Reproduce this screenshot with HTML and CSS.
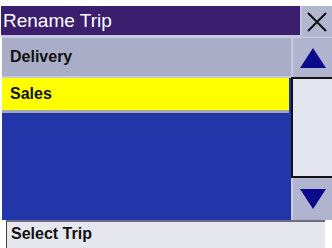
FILE: index.html
```html
<!DOCTYPE html>
<html>
<head>
<meta charset="utf-8">
<link rel="stylesheet" href="styles.css">
</head>
<body>
<div class="screen">
  <div class="header">
    <div class="title">Rename Trip</div>
    <div class="close">
      <svg width="24" height="24" viewBox="0 0 24 24"><path d="M3 3 L21 21 M21 3 L3 21" stroke="#111" stroke-width="2" fill="none"/></svg>
    </div>
  </div>
  <div class="main">
    <div class="list">
      <div class="row row-plain">Delivery</div>
      <div class="row row-selected">Sales</div>
      <div class="fill"></div>
    </div>
    <div class="scroll">
      <div class="btn btn-up">
        <svg width="28" height="22" viewBox="0 0 28 22"><polygon points="14,1 27,21 1,21" fill="#0b0a8a"/></svg>
      </div>
      <div class="track"></div>
      <div class="btn btn-down">
        <svg width="28" height="22" viewBox="0 0 28 22"><polygon points="1,1 27,1 14,21" fill="#0b0a8a"/></svg>
      </div>
    </div>
  </div>
  <div class="status">Select Trip</div>
</div>
</body>
</html>
```
FILE: styles.css
```css
html, body {
  margin: 0;
  padding: 0;
  background: #ffffff;
}
.screen {
  width: 332px;
  height: 248px;
  padding-top: 6px;
  box-sizing: border-box;
  font-family: "Liberation Sans", Arial, sans-serif;
  display: flex;
  flex-direction: column;
}
.header {
  display: flex;
  height: 31px;
  background: #c4c7dc;
  margin-left: 1px;
}
.title {
  flex: 1;
  height: 29px;
  background: #3b1e6d;
  color: #ffffff;
  font-size: 19px;
  line-height: 29px;
  padding-left: 2px;
}
.close {
  width: 30px;
  margin-left: 2px;
  background: #b3b6d0;
  display: flex;
  align-items: center;
  justify-content: center;
}
.main {
  display: flex;
  height: 183px;
}
.list {
  width: 289px;
  margin-left: 2px;
  display: flex;
  flex-direction: column;
  background: #2236aa;
}
.row {
  font-size: 16px;
  font-weight: bold;
  color: #111111;
  padding-left: 8px;
  box-sizing: border-box;
}
.row-plain {
  height: 41px;
  line-height: 38px;
  background: #a9adc7;
  border-top: 1px solid #c9cce0;
  border-bottom: 2px solid #c5c8dc;
}
.row-selected {
  height: 35px;
  line-height: 31px;
  background: #ffff00;
  border-bottom: 3px solid #a3a6b6;
  margin-right: 2px;
}
.fill {
  flex: 1;
}
.scroll {
  width: 41px;
  display: flex;
  flex-direction: column;
}
.btn {
  background: #b1b4ce;
  display: flex;
  align-items: center;
  justify-content: center;
  box-sizing: border-box;
}
.btn-up {
  height: 40px;
  border-left: 2px solid #c6c9dc;
  border-top: 1px solid #c9cce0;
}
.track {
  flex: 1;
  background: #e4e4ee;
  border: 2px solid #111111;
  border-right: none;
}
.btn-down {
  height: 42px;
  border-left: 2px solid #c6c9dc;
}
.status {
  margin-left: 6px;
  width: 319px;
  flex: 1;
  background: #e6e6ef;
  border-left: 1px solid #444444;
  border-top: 2px solid #6c6e80;
  font-size: 16px;
  font-weight: bold;
  color: #111111;
  padding-left: 4px;
  line-height: 24px;
  box-sizing: border-box;
}
```
